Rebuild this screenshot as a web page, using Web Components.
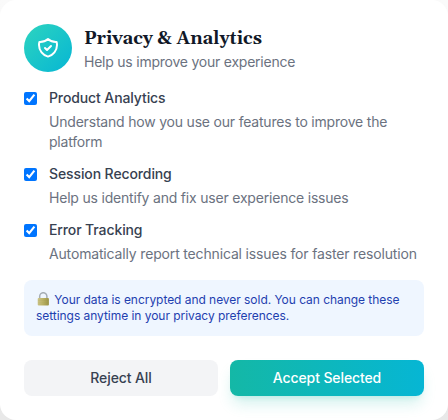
<!DOCTYPE html>
<html lang="en">
<head>
<meta charset="utf-8">
<title>Privacy &amp; Analytics</title>
<style>
html,body{margin:0;height:100%}
body{font-family:Inter,"Liberation Sans",sans-serif;font-size:14px;line-height:20px;color:#374151;overflow:hidden;background:linear-gradient(#fafafa,#e8e8e8)}
consent-option:nth-of-type(3){--track:-.16px}
</style>
</head>
<body>
<consent-card>
  <consent-header slot="header"><span slot="title">Privacy &amp; Analytics</span><span slot="subtitle">Help us improve your experience</span></consent-header>
  <consent-option label="Product Analytics">Understand how you use our features to improve the platform</consent-option>
  <consent-option label="Session Recording">Help us identify and fix user experience issues</consent-option>
  <consent-option label="Error Tracking">Automatically report technical issues for faster resolution</consent-option>
  <privacy-note slot="note">Your data is encrypted and never sold. You can change these settings anytime in your privacy preferences.</privacy-note>
  <action-button slot="actions">Reject All</action-button>
  <action-button slot="actions" primary>Accept Selected</action-button>
</consent-card>
<script>
const define = (name, html, setup) => customElements.define(name, class extends HTMLElement {
  constructor() {
    super();
    const t = document.createElement('template');
    t.innerHTML = html;
    this.attachShadow({ mode: 'open' }).append(t.content.cloneNode(true));
  }
  connectedCallback() { if (setup) setup(this); }
});

define('consent-card', `<style>
:host{display:block;box-sizing:border-box;width:448px;height:420px;padding:24px;background:#fff;border-radius:16px}
.list{display:flex;flex-direction:column;gap:12px;margin:16px 0}
.actions{display:grid;grid-template-columns:1fr 1fr;gap:12px;margin-top:24px}
</style><slot name="header"></slot><div class="list"><slot></slot></div><slot name="note"></slot><div class="actions"><slot name="actions"></slot></div>`);

define('consent-header', `<style>
:host{display:flex;align-items:center;gap:12px}
.badge{display:flex;align-items:center;justify-content:center;width:48px;height:48px;border-radius:50%;background:linear-gradient(135deg,#2dd4bf,#06b6d4)}
h2{box-sizing:border-box;height:28px;margin:0;padding-top:1px;font:700 18px/28px Gelasio,Georgia,"Liberation Serif",serif;color:#111827;white-space:nowrap}
p{margin:0;color:#6b7280;letter-spacing:-.23px}
</style><div class="badge"><svg width="24" height="24" viewBox="0 0 24 24" fill="none" stroke="#fff" stroke-width="2" stroke-linecap="round" stroke-linejoin="round"><path d="M9 12l2 2 4-4m5.618-4.016A11.955 11.955 0 0112 2.944a11.955 11.955 0 01-8.618 3.04A12.02 12.02 0 003 9c0 5.591 3.824 10.29 9 11.622 5.176-1.332 9-6.03 9-11.622 0-1.042-.133-2.052-.382-3.016z"/></svg></div><div><h2><slot name="title"></slot></h2><p><slot name="subtitle"></slot></p></div>`);

define('consent-option', `<style>
:host{display:block}
label{display:flex;align-items:center;gap:12px;font-weight:500;color:#374151;letter-spacing:-.11px}
input{width:13px;height:13px;margin:0}
p{margin:4px 0 0 25px;color:#6b7280;letter-spacing:var(--track,-.2px)}
</style><label><input type="checkbox" checked><span></span></label><p><slot></slot></p>`,
  el => { el.shadowRoot.querySelector('span').textContent = el.getAttribute('label'); });

define('privacy-note', `<style>
:host{display:block;padding:12px;border-radius:8px;background:#eff6ff;color:#1e40af;font-size:12px;line-height:16px;letter-spacing:-.045px}
svg{width:15px;height:14px;margin-right:3.3px;vertical-align:-2px}
</style><svg viewBox="0 0 15 14"><defs><linearGradient id="g"><stop stop-color="#cdc58a"/><stop offset=".45" stop-color="#bdb468"/><stop offset="1" stop-color="#9c9548"/></linearGradient></defs><path d="M3.7 7V4.3a3.6 3.6 0 0 1 7.2 0V7" fill="none" stroke="#a5adb5" stroke-width="1.5"/><rect x="1.7" y="6" width="11.2" height="7.5" rx=".9" fill="url(#g)"/><path d="M2 8.3h10.6M2 10.2h10.6M2 12.1h10.6" stroke="#897d35" stroke-opacity=".25" stroke-width=".5"/></svg><slot></slot>`);

define('action-button', `<style>
:host{display:block}
button{display:block;width:100%;height:36px;padding:0;border:0;border-radius:8px;background:#f3f4f6;color:#374151;font:500 14px/20px Inter,"Liberation Sans",sans-serif;letter-spacing:-.11px}
:host([primary]) button{color:#fff;background:linear-gradient(90deg,#14b8a6,#06b6d4);box-shadow:0 10px 15px -3px rgba(20,184,166,.2),0 4px 6px -4px rgba(20,184,166,.2)}
</style><button><slot></slot></button>`);
</script>
</body>
</html>
